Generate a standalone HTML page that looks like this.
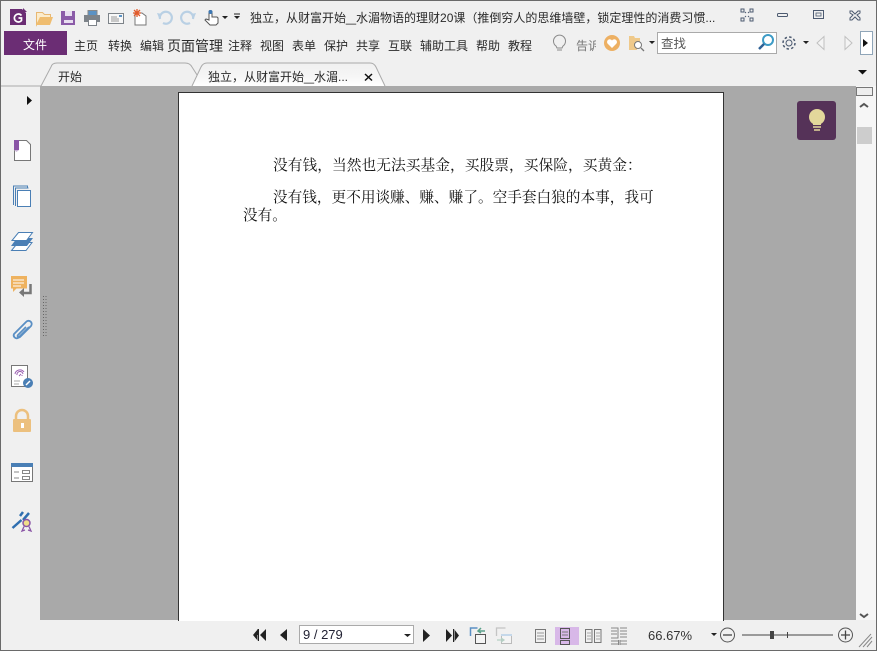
<!DOCTYPE html>
<html><head><meta charset="utf-8">
<style>
html,body{margin:0;padding:0;width:877px;height:651px;overflow:hidden;background:#f0f0f0}
body{position:relative;font-family:"Liberation Sans","Noto Sans CJK SC",sans-serif;font-size:12px;color:#2a2a2a}
.a{position:absolute;white-space:nowrap;line-height:16px}
.m{top:38px}
.u{display:inline-block;width:10px;transform:scaleX(1.5);transform-origin:left}
.d{position:absolute;white-space:nowrap;font-family:"Liberation Serif","Noto Serif CJK SC",serif;font-size:14.6px;line-height:18px;color:#111}
svg{position:absolute;left:0;top:0}
</style></head><body>
<div style="position:absolute;left:40px;top:86px;width:816px;height:534px;background:#a9a9a9"></div>
<div style="position:absolute;left:178px;top:92px;width:544px;height:528px;background:#fff;border:1px solid #333;border-bottom:0"></div>
<div style="position:absolute;left:856px;top:86px;width:20px;height:534px;background:#f6f6f6"></div>
<div style="position:absolute;left:857px;top:127px;width:15px;height:17px;background:#cdcdcd"></div>
<div style="position:absolute;left:856px;top:87px;width:15px;height:7px;background:#eee;border:1px solid #777"></div>
<div style="position:absolute;left:4px;top:31px;width:63px;height:24px;background:#6b2d74"></div>
<div style="position:absolute;left:657px;top:32px;width:118px;height:20px;background:#fff;border:1px solid #aaa"></div>
<div style="position:absolute;left:860px;top:31px;width:11px;height:22px;background:#fff;border:1px solid #8fa5b8"></div>
<div style="position:absolute;left:299px;top:625px;width:113px;height:17px;background:#fff;border:1px solid #aaa"></div>
<div style="position:absolute;left:555px;top:627px;width:24px;height:18px;background:#d8b8e8"></div>
<div style="position:absolute;left:797px;top:101px;width:39px;height:39px;background:#553258;border-radius:3px"></div>

<svg width="877" height="651" viewBox="0 0 877 651" fill="none">
<!-- window frame -->
<rect x="0.5" y="0.5" width="876" height="650" stroke="#6a6a6a"/>
<!-- tabs -->
<path d="M1 86H41" stroke="#aaa"/>
<path d="M41 86L51 67Q52 63 57 63H185Q190 63 192 67L199 78" stroke="#aaa" fill="#f0f0f0"/>
<defs><linearGradient id="t" x1="0" y1="0" x2="0" y2="1"><stop offset="0" stop-color="#f0f0f0"/><stop offset=".6" stop-color="#f6f6f6"/><stop offset="1" stop-color="#fff"/></linearGradient></defs>
<path d="M192 86L201 67Q203 63 207 63H370Q374 63 376 67L385 86Z" fill="url(#t)"/>
<path d="M192 86L201 67Q203 63 207 63H370Q374 63 376 67L385 86" stroke="#aaa"/>
<path d="M365 74l7 6.500M372 74l-7 6.500" stroke="#111" stroke-width="1.500"/>
<!-- quick access -->
<path d="M10 9h12l4 4v12H10z" fill="#6b2d74"/><path d="M23 8l4 4h-4z" fill="#6b2d74"/>
<path d="M21.500 15.500a4 4 0 1 0 0 5v-2.500h-3" stroke="#fff" stroke-width="1.700"/>
<path d="M36.500 25V12.500h6l2 2h6v3H41l-2 3z" stroke="#e8b872" fill="#fbeccd"/><path d="M36 25l4-8h13l-3 8z" fill="#efbd70"/>
<rect x="61" y="11" width="14" height="14" fill="#8b5ba8"/><rect x="65" y="11" width="7" height="5" fill="#e8def0"/><rect x="64" y="20" width="9" height="3" fill="#e8def0"/>
<rect x="88" y="10.500" width="9" height="5" fill="#5b92c4" stroke="#888"/><rect x="84.500" y="15.500" width="15" height="6" fill="#7d8389" stroke="#7d8389"/><rect x="88.500" y="19.500" width="8" height="6" fill="#fff" stroke="#7d8389"/>
<rect x="108.500" y="13.500" width="15" height="10" fill="#f8f8f8" stroke="#7d8389"/><path d="M111 17h6M111 19h8M111 21h8" stroke="#999"/><rect x="119" y="15" width="3" height="2" fill="#5b92c4"/>
<path d="M135 13h7l4 3v9h-11z" fill="#fff" stroke="#777"/>
<path d="M137 9v8M133 13h8M134 10l6 6M140 10l-6 6" stroke="#e25a2a" stroke-width="1.300"/>
<path d="M160 19a6 6 0 1 1 3 4" stroke="#b9d0e4" stroke-width="2.200"/><path d="M157 13l5 1-3 4z" fill="#b9d0e4"/>
<path d="M193 19a6 6 0 1 0-3 4" stroke="#b9d0e4" stroke-width="2.200"/><path d="M196 13l-5 1 3 4z" fill="#b9d0e4"/>
<path d="M209 20v-8a1.500 1.500 0 0 1 3 0v5h5l1 1v5l-2 2h-6l-5-5 1-1z" fill="#fff" stroke="#555"/><circle cx="210.500" cy="12" r="2" fill="#3d78b4"/>
<path d="M222 16h6l-3 3zM234 16h6l-3 3z" fill="#222"/><path d="M234 14h6" stroke="#222"/>
<!-- window buttons -->
<path d="M741 9h3v3h-3zM750 9h3v3h-3zM741 18h3v3h-3zM750 18h3v3h-3z" stroke="#4c5a70"/><path d="M746 12l-1 1M749 12l-1 1M746 17l-1-1M749 17l-1-1" stroke="#4c5a70"/>
<rect x="777.500" y="13.500" width="10" height="3" rx="1" stroke="#4c5a70"/>
<rect x="813.500" y="10.500" width="10" height="8" stroke="#4c5a70"/><rect x="816" y="13" width="5" height="3" stroke="#4c5a70" stroke-width=".8"/>
<path d="M850 11h2l3 3 3-3h2v2l-3 2 3 3v2h-2l-3-3-3 3h-2v-2l3-3-3-2z" stroke="#4c5a70"/>
<!-- right toolbar -->
<path d="M556 46a6 6 0 1 1 7 0l-1 2h-5z" stroke="#8a8a8a"/><path d="M557 50h5" stroke="#8a8a8a"/>
<circle cx="612" cy="43" r="8" fill="#edb063"/><path d="M612 48l-4.500-4.500a2.500 2.500 0 0 1 4.500-3 2.500 2.500 0 0 1 4.500 3z" fill="#fff"/>
<path d="M629 50V36h5l1 2h5v4l-3 3v5z" fill="#efc98a"/><circle cx="638" cy="45" r="3.500" fill="#fff" stroke="#777"/><path d="M641 48l3 3" stroke="#777" stroke-width="1.300"/>
<path d="M649 41h6l-3 3zM803 41h6l-3 3zM711 633h6l-3 3z" fill="#222"/>
<circle cx="768" cy="40" r="5" stroke="#3d9bc6" stroke-width="2" fill="#fff"/><path d="M764 44l-5 5" stroke="#2f6196" stroke-width="2.500"/>
<circle cx="789" cy="43" r="3" stroke="#4c5a70"/><circle cx="789" cy="43" r="6" stroke="#4c5a70" stroke-dasharray="2.500 2.200" stroke-width="1.500"/>
<path d="M824 36.500v13l-7-6.500z" stroke="#c0c0c0" fill="#f4f4f4"/><path d="M845 36.500v13l7-6.500z" stroke="#c0c0c0" fill="#f4f4f4"/>
<path d="M863 39l5 4-5 4z" fill="#111"/>
<path d="M858 70h9l-4.500 4.500z" fill="#111"/>
<!-- bulb -->
<circle cx="817" cy="117" r="8" fill="#e3d79b"/><path d="M813 122h8v3h-8z" fill="#e3d79b"/><path d="M813 127h8M814 130h6" stroke="#e3d79b" stroke-width="1.500"/>
<!-- scrollbar arrows -->
<path d="M860 107l4-3 4 3M860 614l4 3 4-3" stroke="#555" stroke-width="2"/>
<!-- left panel -->
<path d="M27 96v9l5-4.500z" fill="#111"/>
<path d="M14.500 140.500h12l4 4v16h-16z" fill="#fff" stroke="#777"/><rect x="14" y="140" width="5" height="10" fill="#8a55a6"/><path d="M14 150l2.500 2 2.500-2z" fill="#c9b4d6"/>
<path d="M13.500 205v-19h14v2M15.500 206v-18h13" stroke="#4a7fb5"/><rect x="17.500" y="190.500" width="13" height="16" fill="#fff" stroke="#4a7fb5"/>
<path d="M18 242.500h14l-6 8H11.500z" fill="#fff" stroke="#4a7fb5"/>
<path d="M17 238h16l-6 8H11z" fill="#4a7fb5"/>
<path d="M18.500 232.500h14l-6 8H12z" fill="#fff" stroke="#4a7fb5"/>
<rect x="11" y="276" width="16" height="12.500" fill="#eeb25f"/><path d="M13 280h11M13 283h11M13 286h8" stroke="#fff"/><path d="M13 288v4l4-4z" fill="#eeb25f"/>
<path d="M30.500 284v9H23" stroke="#777" stroke-width="2.500"/><path d="M24 288l-5 4.500 5 4.500z" fill="#777"/>
<path d="M43.500 296v42M46 296v42" stroke="#666" stroke-dasharray="1 2"/>
<path d="M29 327l-11 11a3 3 0 0 1-4-4l12-12a2.500 2.500 0 0 1 5 4l-11 11a1.300 1.300 0 0 1-2-2l8-8" stroke="#5a8fc4" stroke-width="1.800"/>
<rect x="11.500" y="365.500" width="16" height="21" fill="#fff" stroke="#777"/>
<path d="M15 374a5 5 0 0 1 9-2M17 375a3 3 0 0 1 6-1M19 376l2-2M22 376v-1" stroke="#9a5fb0"/><path d="M14 381h6M14 384h5" stroke="#aaa"/>
<circle cx="28" cy="383" r="5" fill="#4a7fb5"/><path d="M26 385l4-4" stroke="#fff" stroke-width="1.500"/>
<path d="M16 421v-5a6 6 0 0 1 12 0v5" stroke="#ecc07e" stroke-width="2.500"/><rect x="13" y="419" width="18" height="13" rx="1" fill="#ecc07e"/><rect x="21" y="423" width="3" height="5" fill="#fff"/>
<rect x="11.500" y="463.500" width="21" height="18" fill="#fff" stroke="#777"/><rect x="11" y="463" width="22" height="4" fill="#4a7fb5"/>
<rect x="22.500" y="470.500" width="7" height="3" stroke="#888"/><rect x="22.500" y="476.500" width="7" height="3" stroke="#888"/><path d="M14 472h5M14 478h5" stroke="#888"/>
<path d="M12.500 528l9-8" stroke="#2f6fb0" stroke-width="2.500"/><path d="M20 516l3-4M23 520l6-7" stroke="#2f6fb0" stroke-width="2.500"/>
<circle cx="26.500" cy="523" r="3.500" fill="#f0de88" stroke="#8a55a6" stroke-width="1.500"/><path d="M24 526.500l-2 4.500 3-1M29 526.500l2 4.500-3-1" stroke="#8a55a6" stroke-width="1.300"/>
<!-- status bar -->
<path d="M266 629v12l-6-6zM259 629v12h-1.500v-12zM258 635l-5 0 5-6zM258 635l-5 0 5 6z" fill="#222"/>
<path d="M287 629v12l-7-6z" fill="#222"/>
<path d="M404 634h7l-3.500 3z" fill="#222"/>
<path d="M423 629v13l7-6.500z" fill="#222"/>
<path d="M446 629v13l6-6.500zM453 629v13h1.500v-13zM454 629l5 6.500-5 6.500z" fill="#222"/>
<path d="M470.500 636v-8h7" stroke="#5a8fc4" stroke-width="1.500"/><rect x="475.500" y="634.500" width="10" height="9" fill="#f4f4f4" stroke="#555"/><path d="M485 631h-6M481 628l-3 3 3 2" stroke="#5aa08a" stroke-width="1.500"/>
<path d="M496.500 636v-8h9" stroke="#c4c4c4" stroke-width="1.300"/><rect x="501.500" y="634.500" width="10" height="9" fill="#f4f4f4" stroke="#bbb"/><rect x="501" y="634" width="11" height="2" fill="#c5d8ea"/><path d="M497 640h6M501 638l3 2-3 2" stroke="#b5d0c4" stroke-width="1.200"/>
<rect x="535.500" y="629.500" width="10" height="13" stroke="#777"/><path d="M537 633h7M537 636h7M537 639h7" stroke="#999"/>
<rect x="560.500" y="628.500" width="9" height="10" stroke="#555"/><path d="M562 632h6M562 635h6" stroke="#777"/><rect x="560.500" y="640.500" width="9" height="4" stroke="#555"/>
<rect x="585.500" y="629.500" width="6.500" height="13" stroke="#777"/><rect x="594.500" y="629.500" width="6.500" height="13" stroke="#777"/><path d="M587 633h4M587 636h4M587 639h4M596 633h4M596 636h4M596 639h4" stroke="#aaa"/>
<path d="M611 628h7v10h-7M620 628h7M620 631h7M620 634h7M620 637h7M611 631h6M611 634h6M611 641h7M611 644h7M620 641h7M620 644h7M618.500 640v5M620 640v5" stroke="#888"/>
<circle cx="727.500" cy="635" r="7" stroke="#555"/><path d="M723 635h9" stroke="#444" stroke-width="1.300"/>
<path d="M742 635h91" stroke="#444"/><rect x="770" y="631" width="4" height="8" fill="#444"/><path d="M787.500 632v6" stroke="#444"/>
<circle cx="845.500" cy="635" r="7" stroke="#555"/><path d="M841 635h9M845.500 630.500v9" stroke="#444" stroke-width="1.300"/>
<path d="M859 647l12-13M863 647l9-10M867 647l5-6" stroke="#888"/>
</svg>

<div class="a" style="left:250px;top:10px;width:470px;overflow:hidden">独立，从财富开始<span class="u">_</span>水湄物语的理财20课（推倒穷人的思维墙壁，锁定理性的消费习惯...</div>
<div class="a" style="left:23px;top:37px;color:#fff">文件</div>
<div class="a m" style="left:74px">主页</div>
<div class="a m" style="left:108px">转换</div>
<div class="a m" style="left:140px">编辑</div>
<div class="a m" style="left:167px;font-size:14px">页面管理</div>
<div class="a m" style="left:228px">注释</div>
<div class="a m" style="left:260px">视图</div>
<div class="a m" style="left:292px">表单</div>
<div class="a m" style="left:324px">保护</div>
<div class="a m" style="left:356px">共享</div>
<div class="a m" style="left:388px">互联</div>
<div class="a m" style="left:420px">辅助工具</div>
<div class="a m" style="left:476px">帮助</div>
<div class="a m" style="left:508px">教程</div>
<div class="a m" style="left:576px;width:20px;overflow:hidden;color:#777">告诉</div>
<div class="a" style="left:661px;top:36px;color:#555;font-size:12.500px">查找</div>
<div class="a" style="left:58px;top:69px">开始</div>
<div class="a" style="left:208px;top:69px">独立，从财富开始<span class="u">_</span>水湄...</div>
<div class="d" style="left:273px;top:157px;font-size:14.75px">没有钱，当然也无法买基金，买股票，买保险，买黄金：</div>
<div class="d" style="left:273px;top:189px;font-size:14.65px">没有钱，更不用谈赚、赚、赚了。空手套白狼的本事，我可</div>
<div class="d" style="left:243px;top:207px">没有。</div>
<div class="a" style="left:303px;top:627px;font-size:13px;color:#223">9 / 279</div>
<div class="a" style="left:648px;top:628px;font-size:13px;color:#333">66.67%</div>
</body></html>
